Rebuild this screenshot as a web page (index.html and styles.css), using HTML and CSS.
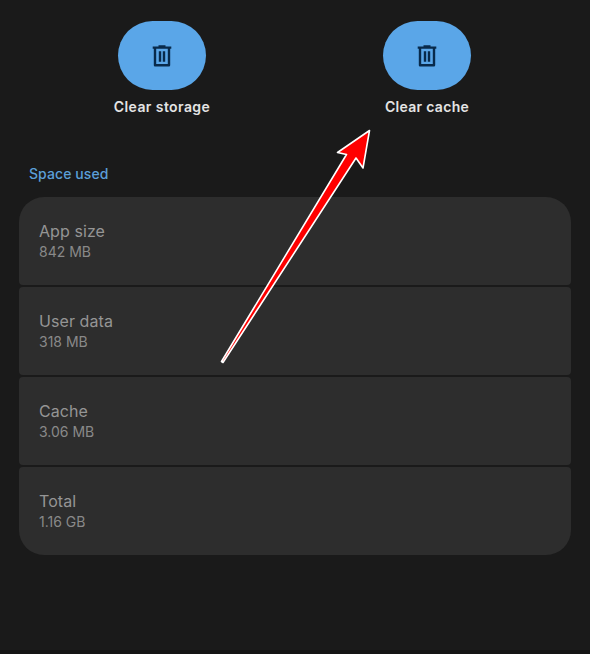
FILE: index.html
```html
<!DOCTYPE html>
<html lang="en">
<head>
<meta charset="utf-8">
<title>Storage</title>
<link rel="stylesheet" href="styles.css">
</head>
<body>
<main class="screen">
  <div class="actions">
    <div class="action">
      <button class="pill" aria-label="Clear storage">
        <svg class="trash" viewBox="0 0 20 24"><path d="M.7 3.6h18.6M6.5 2.4h7M3 4v17.3h14V4M8 7.2v10.6M12 7.2v10.6"/></svg>
      </button>
      <span class="label storage">Clear storage</span>
    </div>
    <div class="action">
      <button class="pill" aria-label="Clear cache">
        <svg class="trash" viewBox="0 0 20 24"><path d="M.7 3.6h18.6M6.5 2.4h7M3 4v17.3h14V4M8 7.2v10.6M12 7.2v10.6"/></svg>
      </button>
      <span class="label cache">Clear cache</span>
    </div>
  </div>
  <h2 class="heading"><span>Space used</span></h2>
  <section class="list">
    <div class="card"><span class="name">App size</span><span class="value">842 MB</span></div>
    <div class="card"><span class="name">User data</span><span class="value">318 MB</span></div>
    <div class="card"><span class="name">Cache</span><span class="value">3.06 MB</span></div>
    <div class="card"><span class="name">Total</span><span class="value total">1.16 GB</span></div>
  </section>
  <svg class="arrow" viewBox="0 0 590 654"><path d="M369.5 130.5L363 168L356 158L223 362.5L221.5 361.5L346.5 154.5L337.5 152.5Z"/></svg>
</main>
</body>
</html>
```
FILE: styles.css
```css
* { box-sizing: border-box; }
body { margin: 0; background: #1a1a1a; font-family: Inter, "Liberation Sans", sans-serif; }
.screen { position: relative; height: 654px; padding: 21px 19px 0; border-bottom: 4px solid #151515; overflow: hidden; }
.actions { display: grid; grid-template-columns: 265px 265px; margin-left: 10.5px; }
.action { display: flex; flex-direction: column; align-items: center; }
.pill { display: flex; align-items: center; justify-content: center; width: 88px; height: 69px; padding: 0; border: 0; border-radius: 35px; background: #5aa6e8; }
.trash { width: 20px; height: 24px; fill: none; stroke: #082a4b; stroke-width: 2.4; stroke-linejoin: round; }
.label { margin-top: 7px; line-height: 20px; font-size: 14px; font-weight: 600; letter-spacing: .42px; color: #e4e4e4; white-space: nowrap; }
.label.cache { letter-spacing: .3px; }
.heading { margin: 47px 0 0 10px; height: 20px; line-height: 20px; font-size: 14px; font-weight: 500; letter-spacing: .08px; color: #5b9fd8; }
.list { display: flex; flex-direction: column; gap: 2.3px; margin-top: 12.5px; }
.card { display: flex; flex-direction: column; height: 88px; padding: 23px 20px 0; border-radius: 4px; background: #2d2d2d; }
.card:first-child { border-radius: 25px 25px 4px 4px; }
.card:last-child { border-radius: 4px 4px 25px 25px; }
.name { line-height: 22px; font-size: 16px; letter-spacing: .08px; color: #959595; }
.value { line-height: 20px; font-size: 14px; color: #898989; }
.arrow { position: absolute; left: 0; top: 0; width: 590px; height: 654px; fill: #f00; stroke: #fff; stroke-width: 1.6; stroke-linejoin: round; pointer-events: none; }
```
